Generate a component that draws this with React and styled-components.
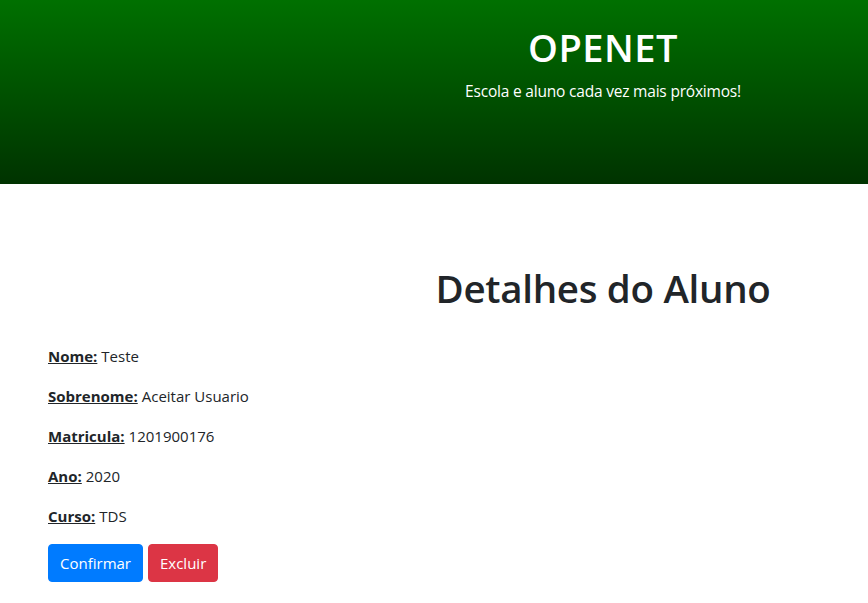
import React from "react";
import styled, { createGlobalStyle } from "styled-components";

const GlobalStyle = createGlobalStyle`
  body {
    margin: 0;
    font-family: "Open Sans", "Noto Sans", sans-serif;
    color: #212529;
    background: #fff;
  }
`;

const Header = styled.header`
  height: 184px;
  background: linear-gradient(to bottom, #007000, #003300);
  display: grid;
  grid-template-columns: 338px 1fr;
  color: #fff;
`;

const Brand = styled.div`
  grid-column: 2;
  text-align: center;
  padding-top: 25px;
`;

const BrandTitle = styled.h1`
  margin: 0;
  font-size: 38px;
  font-weight: 600;
  line-height: 1.2;
  letter-spacing: 0.5px;
`;

const Tagline = styled.p`
  margin: 9px 0 0;
  font-size: 15.5px;
  line-height: 1.5;
  letter-spacing: -0.2px;
`;

const Main = styled.main`
  padding: 0 48px;
`;

const TitleRow = styled.div`
  display: grid;
  grid-template-columns: 338px 1fr;
  margin: 80px -48px 32px;
`;

const PageTitle = styled.h2`
  grid-column: 2;
  margin: 0;
  text-align: center;
  font-size: 38.5px;
  font-weight: 600;
  line-height: 48px;
  letter-spacing: -0.3px;
`;

const Field = styled.p`
  margin: 0 0 16px;
  font-size: 15px;
  line-height: 24px;
`;

const Label = styled.strong`
  font-weight: 700;
  text-decoration: underline;
  margin-right: 4px;
`;

const Actions = styled.div`
  display: flex;
  gap: 5px;
`;

const Button = styled.button`
  font-family: inherit;
  font-size: 15px;
  line-height: 24px;
  padding: 6px 11px;
  border: 1px solid ${(p) => p.$color};
  background: ${(p) => p.$color};
  color: #fff;
  border-radius: 4px;
  cursor: pointer;
`;

const fields = [
  ["Nome:", "Teste"],
  ["Sobrenome:", "Aceitar Usuario"],
  ["Matricula:", "1201900176"],
  ["Ano:", "2020"],
  ["Curso:", "TDS"],
];

export default function App() {
  return (
    <>
      <GlobalStyle />
      <Header>
        <Brand>
          <BrandTitle>OPENET</BrandTitle>
          <Tagline>Escola e aluno cada vez mais próximos!</Tagline>
        </Brand>
      </Header>
      <Main>
        <TitleRow>
          <PageTitle>Detalhes do Aluno</PageTitle>
        </TitleRow>
        {fields.map(([label, value]) => (
          <Field key={label}>
            <Label>{label}</Label>
            {value}
          </Field>
        ))}
        <Actions>
          <Button $color="#007bff">Confirmar</Button>
          <Button $color="#dc3545">Excluir</Button>
        </Actions>
      </Main>
    </>
  );
}
